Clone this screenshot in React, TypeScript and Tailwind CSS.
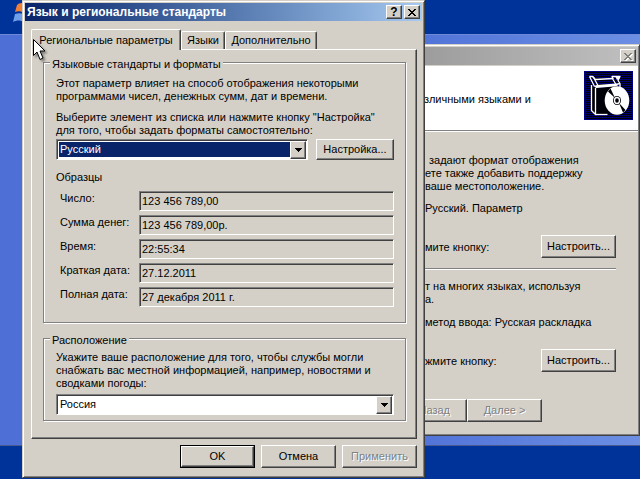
import type { ReactNode } from 'react';

const raised = 'border border-t-white border-l-white border-r-[#404040] border-b-[#404040] shadow-[inset_-1px_-1px_0_#808080]';
const sunken = 'border border-t-[#808080] border-l-[#808080] border-r-white border-b-white shadow-[inset_1px_1px_0_#404040]';

const samples = [
    { id: 'number', label: 'Число:', value: '123 456 789,00' },
    { id: 'currency', label: 'Сумма денег:', value: '123 456 789,00р.' },
    { id: 'time', label: 'Время:', value: '22:55:34' },
    { id: 'short-date', label: 'Краткая дата:', value: '27.12.2011' },
    { id: 'long-date', label: 'Полная дата:', value: '27 декабря 2011 г.' },
];

const Button: React.FC<{ children: ReactNode; className: string; disabled?: boolean }> = ({ children, className, disabled }) => (
    <button
        type="button"
        disabled={disabled}
        className={`bg-[#d4d0c8] text-center whitespace-nowrap disabled:text-[#808080] disabled:[text-shadow:1px_1px_0_#fff] ${raised} ${className}`}
    >
        {children}
    </button>
);

const CloseIcon: React.FC<{ className: string }> = ({ className }) => (
    <svg viewBox="0 0 8 7" className={`h-[7px] w-2 ${className}`} shapeRendering="crispEdges">
        <path
            fill="currentColor"
            d="M0 0h2v1h1v1h2v-1h1v-1h2v1h-1v1h-1v1h-1v1h1v1h1v1h1v1h-2v-1h-1v-1h-2v1h-1v1h-2v-1h1v-1h1v-1h1v-1h-1v-1h-1v-1h-1z"
        />
    </svg>
);

const ComboBox: React.FC<{ id: string; value: string; className: string; selectClassName: string }> = ({ id, value, className, selectClassName }) => (
    <div className={`relative h-[21px] bg-white p-px ${sunken} ${className}`}>
        <select id={id} defaultValue={value} className={`block h-full w-full appearance-none border border-white pl-px outline-none ${selectClassName}`}>
            <option>{value}</option>
        </select>
        <span className={`pointer-events-none absolute top-px right-px bottom-0 flex w-4 items-center justify-center bg-[#d4d0c8] ${raised}`}>
            <svg viewBox="0 0 7 4" className="h-1 w-[7px]" shapeRendering="crispEdges">
                <path d="M0 0h7v1h-1v1h-1v1h-1v1h-1v-1h-1v-1h-1v-1h-1z" />
            </svg>
        </span>
    </div>
);

const Group: React.FC<{ title: string; children: ReactNode; className: string }> = ({ title, children, className }) => (
    <fieldset className={`border border-[#808080] pr-[11px] pl-3 shadow-[1px_1px_0_#fff,inset_1px_1px_0_#fff] ${className}`}>
        <legend className="-ml-[6px] bg-[#d4d0c8] px-[2px] pt-1">{title}</legend>
        {children}
    </fieldset>
);

const SetupIcon = () => (
    <svg viewBox="0 0 49 49" className="size-[49px]">
        <defs>
            <pattern id="dither" width="2" height="2" patternUnits="userSpaceOnUse">
                <rect width="2" height="2" fill="#000008" />
                <rect width="1" height="1" fill="#000078" />
            </pattern>
        </defs>
        <rect width="49" height="49" fill="#000080" />
        <rect x="1" y="1" width="47" height="47" fill="url(#dither)" shapeRendering="crispEdges" />
        <path fill="#000008" d="M8 15l4 2 24-2v5L25 43l-13 1-4-4z" />
        <g fill="none" stroke="#fff" strokeWidth="1.300" strokeLinejoin="round">
            <path d="M7.500 14v25.500l4 4V17" />
            <path d="M11.500 43.500h12" />
            <path d="M36 13v4" />
            <path d="M5.500 5.500l5 10M5.500 5.500h3l3 3 18-1" />
            <path d="M9 5.500l5 9" />
            <path d="M28 5.500h8l-2 4 2 3-4 1-3-5z" />
        </g>
        <path fill="#fff" d="M10 15l3-1 19-1.500 2 2-4 1-18 1.500z" />
        <path fill="#fff" d="M31 5h5v2l-3 2z" />
        <ellipse cx="33" cy="29.500" rx="12.300" ry="14.300" fill="#fff" />
        <path fill="#000008" d="M31 27l-7-6.500 2.500-3zM35 32l6.500 7-2.500 2.500z" />
        <ellipse cx="33" cy="29.500" rx="4" ry="4.500" fill="#000008" />
        <ellipse cx="33" cy="29.500" rx="2.500" ry="3" fill="none" stroke="#fff" strokeWidth="1.400" />
    </svg>
);

const SetupWizard = () => (
    <section className="absolute top-11 right-0 left-[392px] h-[392px] border border-[#d4d0c8] border-r-[#404040] border-b-[#404040] bg-[#d4d0c8] p-[2px] pr-[1px] shadow-[inset_1px_1px_0_#fff,inset_-1px_-1px_0_#808080]">
        <header className="flex h-[18px] items-center justify-end bg-linear-to-r from-[#989898] to-[#c0c0c0] pr-[2px]">
            <button type="button" disabled aria-label="Закрыть" className={`flex h-[14px] w-4 items-center justify-center bg-[#d4d0c8] pr-px ${raised}`}>
                <CloseIcon className="text-[#808080] drop-shadow-[1px_1px_0_#fff]" />
            </button>
        </header>
        <div className="mt-px flex h-[65px] justify-between border-b border-[#808080] bg-white pt-[5px] pr-[5px] pl-[29px] shadow-[0_1px_0_#fff]">
            <p className="pt-[22px]">зличными языками и</p>
            <SetupIcon />
        </div>
        <div className="pr-[22px] pl-[30px] whitespace-nowrap">
            <p className="pt-[23px] pl-1">задают формат отображения</p>
            <p>ете также добавить поддержку</p>
            <p>ваше местоположение.</p>
            <p className="pt-[9px]">Русский. Параметр</p>
            <div className="flex justify-between pt-5">
                <p className="pt-[6px]">мите кнопку:</p>
                <Button className="h-[23px] w-[75px]">Настроить...</Button>
            </div>
            <hr className="mt-[10px] border-[#808080] shadow-[0_1px_0_#fff]" />
            <p className="pt-[11px]">т на многих языках, используя</p>
            <p>а.</p>
            <p className="pt-[10px]">метод ввода: Русская раскладка</p>
            <div className="flex justify-between pt-5">
                <p className="pt-[6px]">жмите кнопку:</p>
                <Button className="h-[23px] w-[75px]">Настроить...</Button>
            </div>
        </div>
        <footer className="-ml-[3px] flex pt-[27px]">
            <Button disabled className="h-[23px] w-[75px]">&lt; Назад</Button>
            <Button disabled className="h-[23px] w-[75px]">Далее &gt;</Button>
        </footer>
    </section>
);

const Tab: React.FC<{ children: ReactNode; className: string; selected?: boolean }> = ({ children, className, selected = false }) => (
    <button
        type="button"
        role="tab"
        aria-selected={selected}
        className={`rounded-t-[2px] border border-t-white border-r-[#404040] border-b-0 border-l-white bg-[#d4d0c8] shadow-[inset_-1px_0_0_#808080] ${className}`}
    >
        {children}
    </button>
);

const RegionalDialog = () => (
    <section
        role="dialog"
        aria-labelledby="dialog-title"
        className="absolute top-0 left-[22px] w-[403px] border border-[#d4d0c8] border-r-[#404040] border-b-[#404040] bg-[#d4d0c8] p-[2px] shadow-[inset_1px_1px_0_#fff,inset_-1px_-1px_0_#808080]"
    >
        <header className="flex h-[18px] items-center gap-[2px] bg-linear-to-r from-[#0a246a] to-[#a6caf0] pr-[2px] pl-[2px]">
            <h1 id="dialog-title" className="flex-1 text-xs font-bold text-white">Язык и региональные стандарты</h1>
            <button type="button" aria-label="Справка" className={`flex h-[14px] w-4 items-center justify-center bg-[#d4d0c8] text-xs leading-3 font-bold ${raised}`}>
                ?
            </button>
            <button type="button" aria-label="Закрыть" className={`flex h-[14px] w-4 items-center justify-center bg-[#d4d0c8] pr-px ${raised}`}>
                <CloseIcon className="text-black" />
            </button>
        </header>

        <div className="pt-2 pr-[5px] pb-[7px] pl-[6px]">
            <div role="tablist" className="flex h-5 items-end">
                <Tab selected className="relative z-10 -mb-px h-[21px] w-[150px]">Региональные параметры</Tab>
                <Tab className="h-[18px] w-11">Языки</Tab>
                <Tab className="h-[18px] w-[92px]">Дополнительно</Tab>
            </div>

            <div role="tabpanel" className={`pt-1 pr-[10px] pb-[17px] pl-[11px] ${raised}`}>
                <Group title="Языковые стандарты и форматы" className="pb-[15px]">
                    <p className="pt-[6px]">
                        Этот параметр влияет на способ отображения некоторыми
                        <br />
                        программами чисел, денежных сумм, дат и времени.
                    </p>
                    <label htmlFor="format" className="mt-2 block">
                        Выберите элемент из списка или нажмите кнопку "Настройка"
                        <br />
                        для того, чтобы задать форматы самостоятельно:
                    </label>
                    <div className="mt-[2px] flex gap-2">
                        <ComboBox id="format" value="Русский" className="flex-1" selectClassName="bg-[#0a246a] text-white" />
                        <Button className="h-[21px] w-[78px]">Настройка...</Button>
                    </div>
                    <h2 className="mt-[11px]">Образцы</h2>
                    <div className="mt-[7px] grid grid-cols-[80px_1fr] gap-x-[3px] gap-y-1">
                        {samples.map((s) => (
                            <div key={s.id} className="contents">
                                <label htmlFor={s.id} className="pt-px pl-1 whitespace-nowrap">{s.label}</label>
                                <input id={s.id} type="text" readOnly value={s.value} className={`h-5 min-w-0 bg-[#d4d0c8] px-[2px] outline-none ${sunken}`} />
                            </div>
                        ))}
                    </div>
                </Group>

                <Group title="Расположение" className="mt-[7px] pb-[5px]">
                    <label htmlFor="location" className="block pt-1">
                        Укажите ваше расположение для того, чтобы службы могли
                        <br />
                        снабжать вас местной информацией, например, новостями и
                        <br />
                        сводками погоды:
                    </label>
                    <ComboBox id="location" value="Россия" className="mt-1" selectClassName="bg-white text-black" />
                </Group>
            </div>

            <div className="mt-[6px] flex justify-end gap-[6px]">
                <div className="border border-black">
                    <Button className="h-[21px] w-[73px]">OK</Button>
                </div>
                <Button className="h-[23px] w-[75px]">Отмена</Button>
                <Button disabled className="h-[23px] w-[75px]">Применить</Button>
            </div>
        </div>
    </section>
);

const Cursor = () => (
    <svg viewBox="0 0 14 22" className="absolute top-[39px] left-[33px] z-20 h-[22px] w-[14px] drop-shadow-[2px_2px_1px_rgba(0,0,0,0.4)]">
        <path d="M.5 .5v16l3.500-3.500 3 7.500 3-1.500-3-7h5z" fill="#fff" stroke="#000" />
    </svg>
);

const App: React.FC = () => {
    return (
        <main className="relative flex min-h-screen flex-col overflow-hidden bg-[#003399] font-['Liberation_Sans',Arial,sans-serif] text-[11px] leading-[13px] text-black">
            <div className="h-[34px]">
                <svg viewBox="0 0 24 34" className="h-[34px] w-6">
                    <path d="M17 5c2-2 4-2 7-2v10c-3-2-6-2-9-1z" fill="#f08038" />
                    <path d="M15 14c3-1 6-1 9 0v8c-4-2-7-2-11 0z" fill="#6f9fe8" />
                </svg>
            </div>
            <div className="flex-1 border-t border-[#7088d8] bg-linear-to-r from-[#4d6fd6] from-60% to-[#6c8fe4]" />
            <div className="h-[34px] border-t border-[#4a5a90]" />
            <SetupWizard />
            <RegionalDialog />
            <Cursor />
        </main>
    );
};

export default App;
